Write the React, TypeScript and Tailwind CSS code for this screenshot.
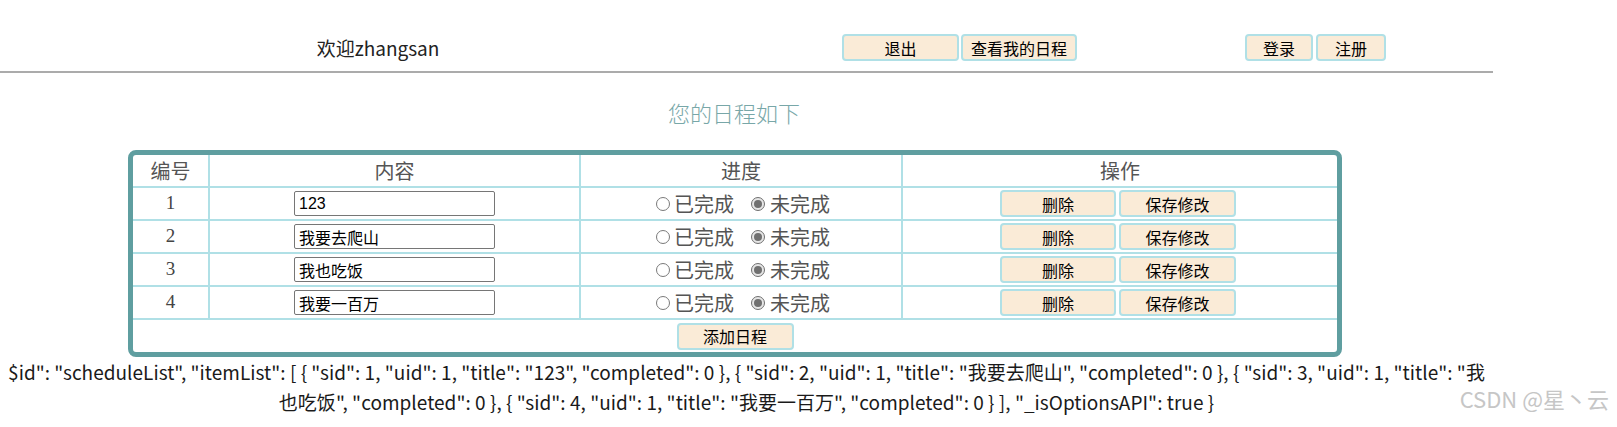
import React from "react";

const btn =
  "h-[27px] bg-[#faebd7] border-2 border-[#b0e0e6] rounded-[4px] text-[16px] leading-none text-black flex items-center justify-center font-['Noto_Sans_CJK_SC',sans-serif]";

function Radio({ checked }: { checked: boolean }) {
  if (checked) {
    return (
      <span className="w-[14px] h-[14px] rounded-full border border-[#6f6f6f] bg-[#e6e6e6] flex items-center justify-center">
        <span className="w-[8px] h-[8px] rounded-full bg-[#707070]" />
      </span>
    );
  }
  return <span className="w-[14px] h-[14px] rounded-full border border-[#7a7a7a] bg-white" />;
}

const rows = [
  { id: 1, title: "123" },
  { id: 2, title: "我要去爬山" },
  { id: 3, title: "我也吃饭" },
  { id: 4, title: "我要一百万" },
];

export default function App() {
  return (
    <div className="relative w-[1617px] h-[427px] bg-white overflow-hidden text-[#222] font-['Noto_Sans_CJK_SC',sans-serif]">
      <header className="flex items-center w-[1493px] pt-[34px] pb-[10px]">
        <div className="w-[756px] text-center text-[19px] leading-none">欢迎zhangsan</div>
        <button className={`${btn} ml-[86px] w-[117px]`}>退出</button>
        <button className={`${btn} ml-[2px] w-[116px]`}>查看我的日程</button>
        <button className={`${btn} ml-[168px] w-[68px]`}>登录</button>
        <button className={`${btn} ml-[3px] w-[70px]`}>注册</button>
      </header>
      <div className="w-[1493px] h-[2px] bg-[#ababab]" />

      <h2 className="mt-[24px] w-[1468px] text-center text-[22px] leading-[30px] text-[#78a7a8] font-light">
        您的日程如下
      </h2>

      <div className="mt-[23px] ml-[128px] w-[1214px] border-[5px] border-[#5f9ea0] rounded-[8px] overflow-hidden text-[20px] text-[#555]">
        <div className="grid grid-cols-[75px_371px_322px_436px] h-[33px] border-b-2 border-[#b0e0e6]">
          <div className="flex items-center justify-center">编号</div>
          <div className="flex items-center justify-center border-l-2 border-[#b0e0e6]">内容</div>
          <div className="flex items-center justify-center border-l-2 border-[#b0e0e6]">进度</div>
          <div className="flex items-center justify-center border-l-2 border-[#b0e0e6]">操作</div>
        </div>
        {rows.map((r) => (
          <div
            key={r.id}
            className="grid grid-cols-[75px_371px_322px_436px] h-[33px] border-b-2 border-[#b0e0e6]"
          >
            <div className="flex items-center justify-center font-['Liberation_Serif',serif] text-[19px] text-[#444]">
              {r.id}
            </div>
            <div className="flex items-center justify-center border-l-2 border-[#b0e0e6]">
              <input
                readOnly
                value={r.title}
                className="w-[201px] h-[25px] border border-[#767676] rounded-[2px] px-[4px] text-[16px] text-black bg-white font-['Liberation_Sans','Noto_Sans_CJK_SC',sans-serif] outline-none"
              />
            </div>
            <div className="flex items-center justify-center border-l-2 border-[#b0e0e6]">
              <div className="flex items-center pl-[4px]">
                <Radio checked={false} />
                <span className="ml-[4px] leading-none">已完成</span>
                <span className="ml-[17px]">
                  <Radio checked={true} />
                </span>
                <span className="ml-[5px] leading-none">未完成</span>
              </div>
            </div>
            <div className="flex items-center justify-center border-l-2 border-[#b0e0e6]">
              <div className="flex items-center gap-[3px] pr-[4px]">
                <button className={`${btn} w-[116px]`}>删除</button>
                <button className={`${btn} w-[117px]`}>保存修改</button>
              </div>
            </div>
          </div>
        ))}
        <div className="h-[32px] flex items-center justify-center">
          <button className={`${btn} w-[117px]`}>添加日程</button>
        </div>
      </div>

      <div className="w-[1493px] text-center text-[19px] leading-[30px] text-[#1a1a1a] whitespace-nowrap tracking-[0.03px]">
        <div>
          $id": "scheduleList", "itemList": [ {"{"} "sid": 1, "uid": 1, "title": "123", "completed": 0 {"}"}, {"{"} "sid": 2, "uid": 1, "title": "我要去爬山", "completed": 0 {"}"}, {"{"} "sid": 3, "uid": 1, "title": "我
        </div>
        <div>
          也吃饭", "completed": 0 {"}"}, {"{"} "sid": 4, "uid": 1, "title": "我要一百万", "completed": 0 {"}"} ], "_isOptionsAPI": true {"}"}
        </div>
      </div>

      <div className="absolute right-[8px] top-[387px] text-[22px] leading-none text-[#c6c6c6] whitespace-nowrap">
        CSDN @星丶云
      </div>
    </div>
  );
}
